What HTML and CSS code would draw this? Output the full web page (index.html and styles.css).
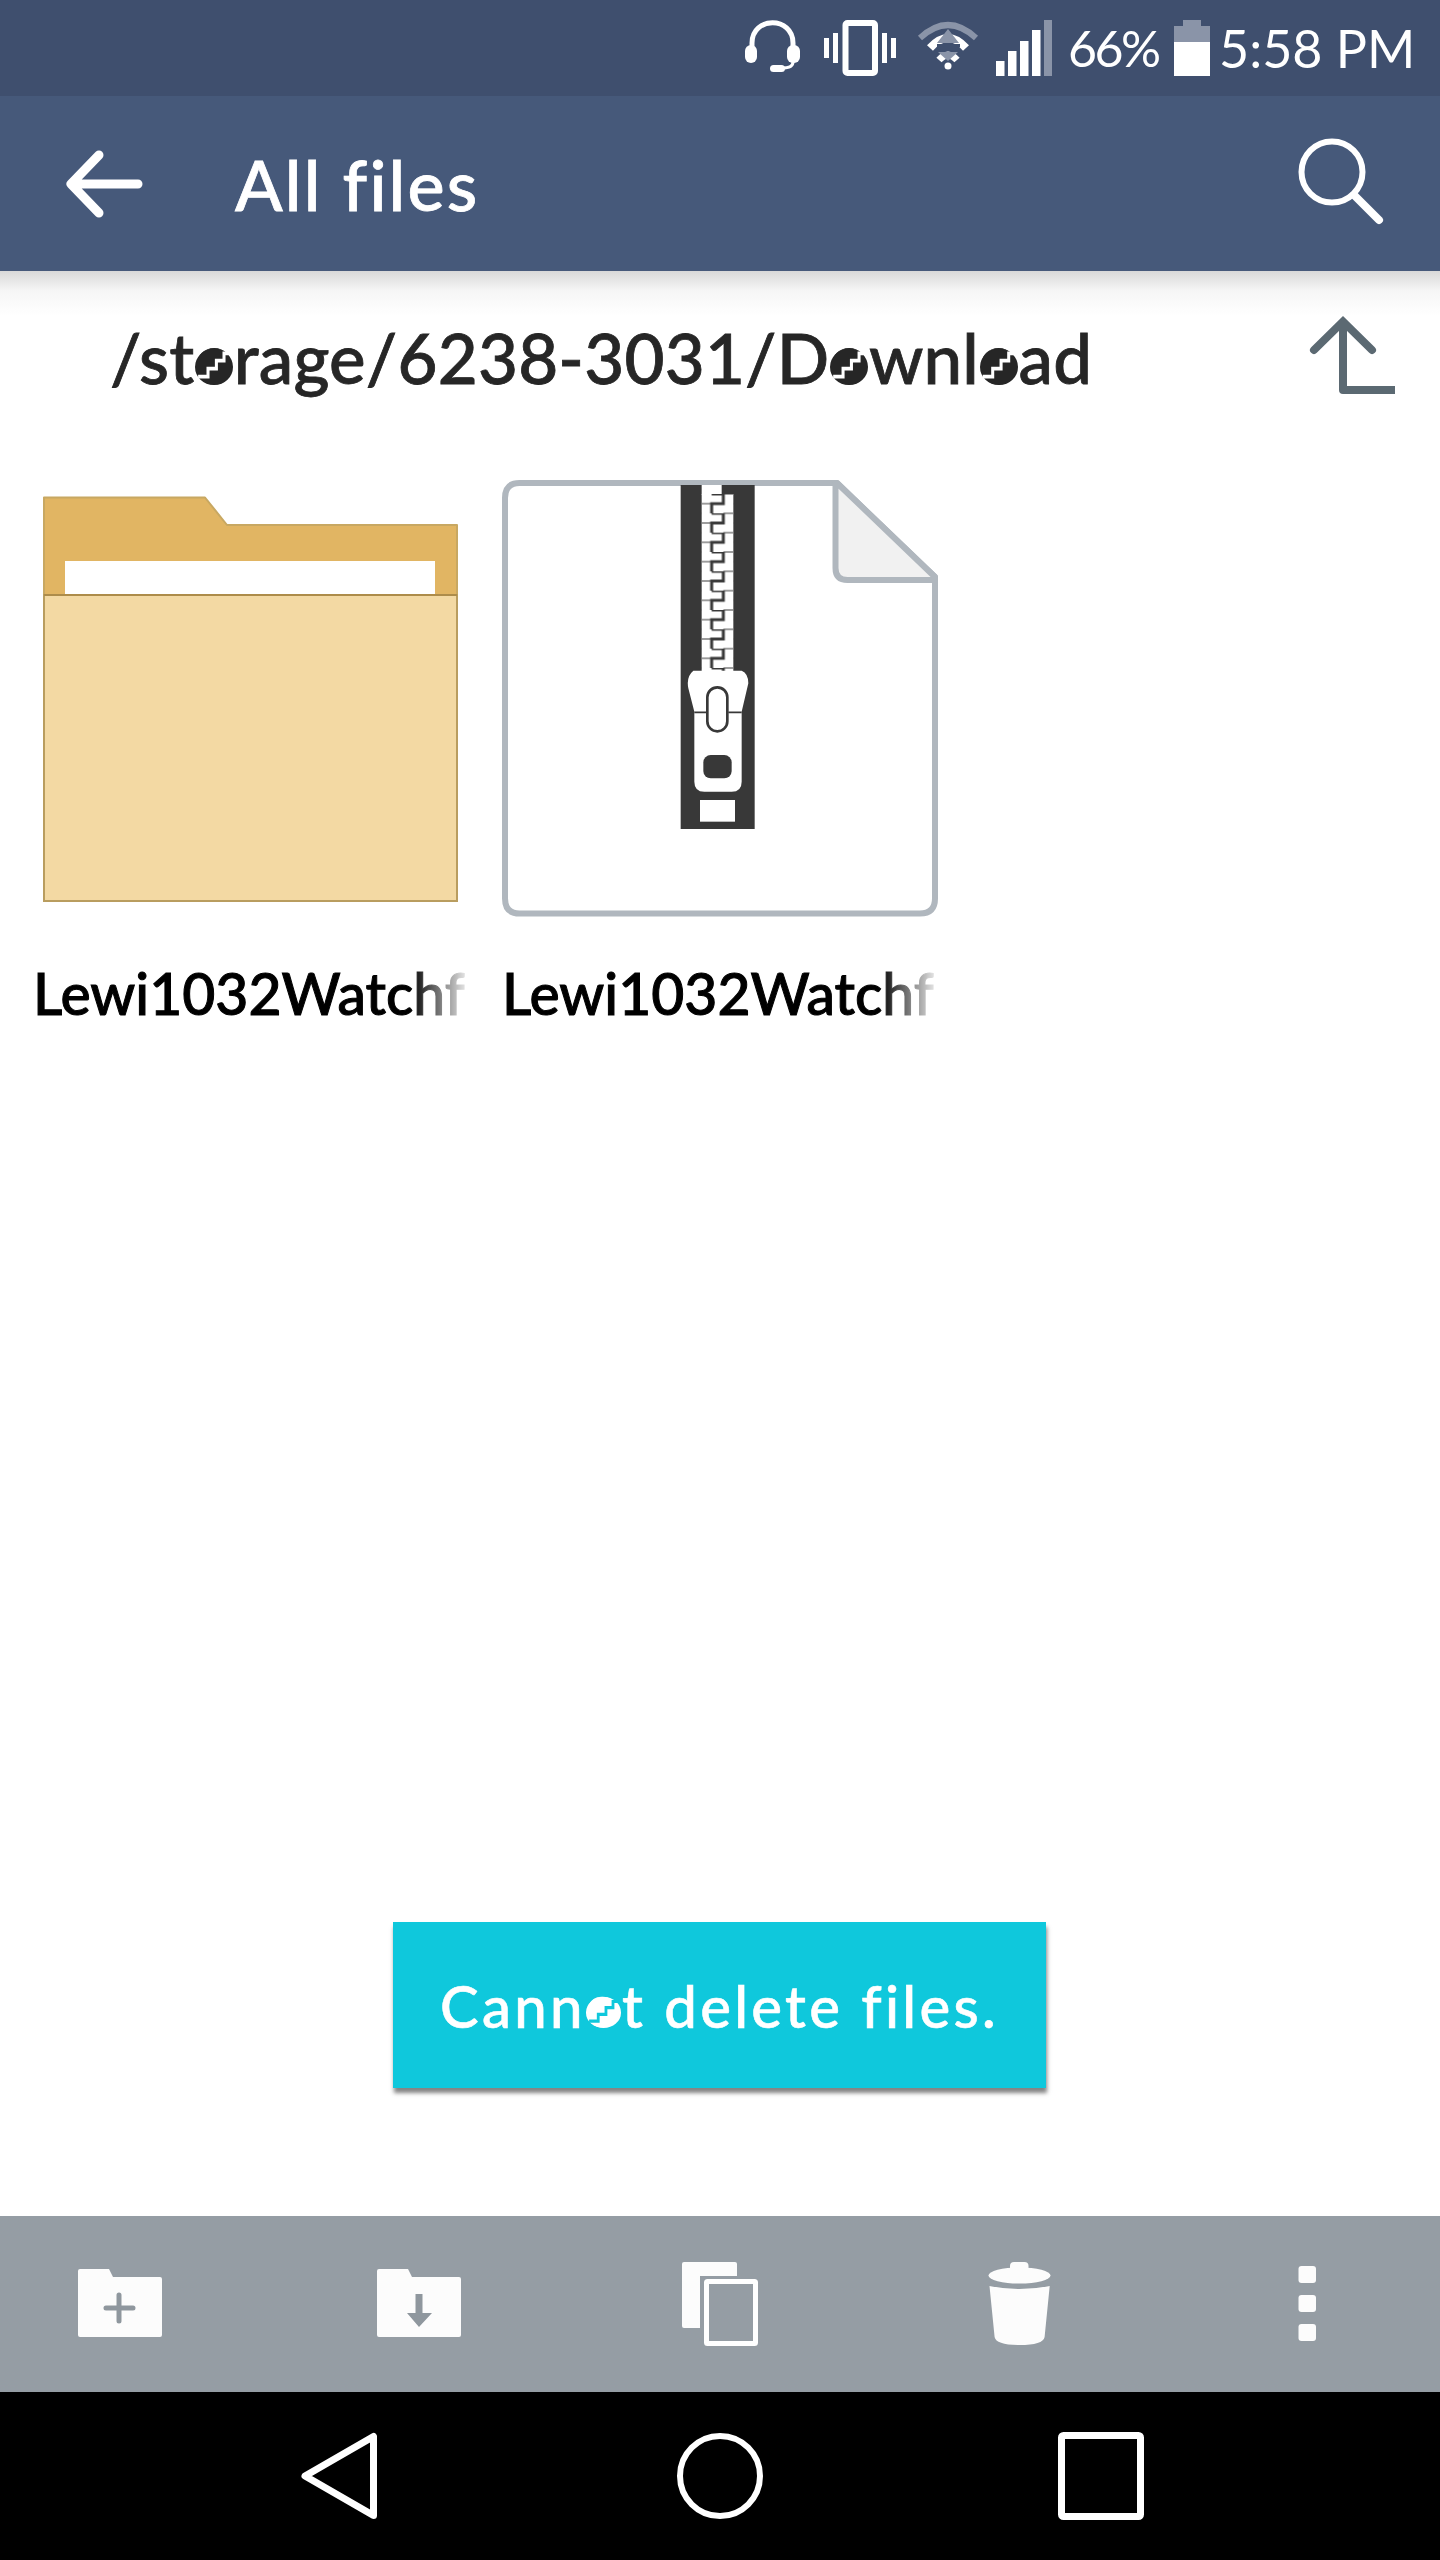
FILE: index.html
```html
<!DOCTYPE html>
<html lang="en">
<head>
    <meta charset="UTF-8">
    <meta name="viewport" content="width=device-width, initial-scale=1.0">
    <title>All files</title>
    <link rel="stylesheet" href="styles.css">
</head>
<body>
    <div class="status-bar">
        <svg class="status-icons" width="316" height="96" viewBox="0 0 316 96">
            <!-- headset -->
            <path d="M12 47V43C12 16 53 16 53 43V47" fill="none" stroke="#fff" stroke-width="5"/>
            <rect x="5" y="45" width="12" height="18" rx="6" fill="#fff"/>
            <rect x="47" y="45" width="13" height="18" rx="6" fill="#fff"/>
            <path d="M53 62Q53 68 42 68" fill="none" stroke="#fff" stroke-width="3"/>
            <rect x="30" y="65" width="15" height="7" rx="3.5" fill="#fff"/>
            <!-- vibrate -->
            <rect x="105.5" y="23" width="29.5" height="50" rx="2" fill="none" stroke="#fff" stroke-width="6"/>
            <rect x="84" y="38" width="5" height="20" fill="#fff"/>
            <rect x="93" y="33" width="5" height="30" fill="#fff"/>
            <rect x="142" y="33" width="5" height="30" fill="#fff"/>
            <rect x="151" y="38" width="5" height="20" fill="#fff"/>
            <!-- wifi -->
            <path d="M180 38Q208 12 236 38" fill="none" stroke="#8a94a8" stroke-width="6"/>
            <path d="M190 48Q208 28 226 48" fill="none" stroke="#fff" stroke-width="8"/>
            <path d="M199 60Q208 50 217 60" fill="none" stroke="#fff" stroke-width="7"/>
            <circle cx="208" cy="66" r="3.5" fill="#fff"/>
            <path d="M208 29L219 43H197Z" fill="#8a94a8"/>
            <rect x="197" y="44" width="23" height="3" fill="#3f4f6e"/>
            <path d="M198 52H218L208 61Z" fill="#8a94a8"/>
            <!-- signal -->
            <rect x="256" y="61" width="8.5" height="15" fill="#fff"/>
            <rect x="268" y="51" width="8.5" height="25" fill="#fff"/>
            <rect x="280" y="41" width="8.5" height="35" fill="#fff"/>
            <rect x="292" y="30" width="8.5" height="46" fill="#fff"/>
            <rect x="304" y="20" width="8" height="56" fill="#8a94a8"/>
        </svg>
        <span class="status-pct">66%</span>
        <svg class="status-batt" width="36" height="96" viewBox="0 0 36 96">
            <rect x="9" y="20" width="18" height="6" fill="#8a94a8"/>
            <rect x="0" y="26" width="36" height="16" fill="#8a94a8"/>
            <rect x="0" y="42" width="36" height="34" fill="#fff"/>
        </svg>
        <span class="status-time">5:58 PM</span>
    </div>

    <div class="toolbar">
        <svg class="back" width="90" height="90" viewBox="0 0 90 90">
            <path d="M39 16L11 45L39 74M11 45H78" fill="none" stroke="#fff" stroke-width="9" stroke-linecap="round" stroke-linejoin="round"/>
        </svg>
        <h1 class="title">All files</h1>
        <svg class="search" width="100" height="101" viewBox="0 0 100 101">
            <circle cx="42" cy="39" r="30.5" fill="none" stroke="#fff" stroke-width="6"/>
            <path d="M64 62L89 87" fill="none" stroke="#fff" stroke-width="8" stroke-linecap="round"/>
        </svg>
    </div>

    <main class="content">
        <div class="path-row">
            <div class="path">/st<span class="cut">o</span>rage/6238-3031/D<span class="cut">o</span>wnl<span class="cut">o</span>ad</div>
            <svg class="up" width="100" height="90" viewBox="0 0 100 90">
                <path d="M14 44L43 15.5L72 44" fill="none" stroke="#5b6972" stroke-width="8" stroke-linecap="round"/>
                <path d="M43 16V84H95" fill="none" stroke="#5b6972" stroke-width="8" stroke-linejoin="round"/>
            </svg>
        </div>

        <div class="files">
            <div class="file">
                <svg class="thumb" width="469" height="455" viewBox="0 0 469 455">
                    <path d="M44 22.5H205L227 50H457V120H44Z" fill="#e1b563" stroke="#c8a862" stroke-width="2" stroke-linejoin="round"/>
                    <rect x="65" y="86" width="370" height="34" fill="#fff"/>
                    <rect x="44" y="120" width="413" height="306" fill="#f3d9a3" stroke="#b99d5f" stroke-width="2"/>
                    <path d="M44 120H457" stroke="#ad8c4a" stroke-width="2"/>
                </svg>
                <div class="name">Lewi1032Watchf</div>
            </div>
            <div class="file">
                <svg class="thumb" width="469" height="455" viewBox="0 0 469 455">
                    <defs>
                        <pattern id="teeth" x="125" y="42" width="95" height="58" patternUnits="userSpaceOnUse">
                            <path d="M30 0H65V29H30V58" fill="none" stroke="#383838" stroke-width="9"/>
                            <path d="M0 29H30M65 0H95M65 58H95" fill="none" stroke="#383838" stroke-width="3"/>
                        </pattern>
                    </defs>
                    <path d="M50.5 8H368L466 102V423.5Q466 438.500 451 438.500H50.500Q36 438.500 36 423.500V23Q36 8 50.500 8Z" fill="#fff" stroke="#b0b7be" stroke-width="6" stroke-linejoin="round"/>
                    <path d="M366.500 8V93Q366.500 105 378.500 105H466V102L368 8Z" fill="#f1f1f1" stroke="#b0b7be" stroke-width="6" stroke-linejoin="round"/>
                    <svg x="191" y="5" width="110" height="360" viewBox="0 0 330 1080">
                        <rect x="62" y="15" width="222" height="1032" fill="#383838"/>
                        <rect x="125" y="15" width="60" height="30" fill="#fff"/>
                        <rect x="125" y="42" width="95" height="535" fill="#fff"/>
                        <rect x="125" y="42" width="95" height="535" fill="url(#teeth)"/>
                        <path d="M100 572H245Q265 580 265 610L245 695V905Q245 935 215 935H133Q103 935 103 905V695L85 625Q78 590 100 572Z" fill="#fff"/>
                        <path d="M103 697H140M205 697H245" stroke="#383838" stroke-width="5"/>
                        <rect x="142" y="622" width="60" height="132" rx="30" fill="#fff" stroke="#383838" stroke-width="8"/>
                        <rect x="130" y="825" width="85" height="70" rx="22" fill="#383838"/>
                        <rect x="120" y="960" width="105" height="65" fill="#fff"/>
                    </svg>
                </svg>
                <div class="name">Lewi1032Watchf</div>
            </div>
        </div>

        <div class="toast">Cann<span class="cut">o</span>t delete files.</div>
    </main>

    <div class="actions">
        <svg width="100" height="100" viewBox="0 0 100 100">
            <path d="M10 15H39L43 23H90Q92 23 92 25V81Q92 83 90 83H10Q8 83 8 81V17Q8 15 10 15Z" fill="#fcfcfc"/>
            <path d="M36 54H63M49 41V67" stroke="#8f979e" stroke-width="5" stroke-linecap="round"/>
        </svg>
        <svg width="100" height="100" viewBox="0 0 100 100">
            <path d="M10 15H39L43 23H90Q92 23 92 25V81Q92 83 90 83H10Q8 83 8 81V17Q8 15 10 15Z" fill="#fcfcfc"/>
            <path d="M46.5 40H53.5V59H63L50 73L38 59H46.5Z" fill="#8f979e"/>
        </svg>
        <svg width="100" height="100" viewBox="0 0 100 100">
            <rect x="14" y="8" width="55" height="66" rx="2" fill="#fcfcfc"/>
            <rect x="32" y="22" width="62" height="74" fill="#959da4"/>
            <rect x="38.5" y="27.5" width="49" height="62" rx="1" fill="#959da4" stroke="#fff" stroke-width="5"/>
        </svg>
        <svg width="100" height="100" viewBox="0 0 100 100">
            <rect x="43" y="8" width="18.5" height="10" rx="4" fill="#fcfcfc"/>
            <ellipse cx="52.5" cy="21.5" rx="31" ry="8" fill="#fcfcfc"/>
            <path d="M22.5 32Q52.5 38 82.700 32L77.600 83Q76 91 52.5 91Q29 91 27.600 83Z" fill="#fcfcfc"/>
        </svg>
        <svg class="more" width="100" height="100" viewBox="0 0 100 100">
            <rect x="41.5" y="12" width="17.5" height="17" rx="3" fill="#fcfcfc"/>
            <rect x="41.5" y="41" width="17.5" height="17" rx="3" fill="#fcfcfc"/>
            <rect x="41.5" y="70" width="17.5" height="17" rx="3" fill="#fcfcfc"/>
        </svg>
    </div>

    <div class="nav">
        <svg width="100" height="100" viewBox="0 0 100 100">
            <path d="M16 50L84.5 10.5V89.5Z" fill="none" stroke="#fff" stroke-width="7" stroke-linejoin="round"/>
        </svg>
        <svg width="100" height="100" viewBox="0 0 100 100">
            <circle cx="50" cy="50" r="40" fill="none" stroke="#fff" stroke-width="6"/>
        </svg>
        <svg width="100" height="100" viewBox="0 0 100 100">
            <rect x="10.5" y="9.5" width="79" height="81" rx="2" fill="none" stroke="#fff" stroke-width="7"/>
        </svg>
    </div>
</body>
</html>
```

FILE: styles.css
```css
* {
    box-sizing: border-box;
}

body {
    margin: 0;
    width: 1440px;
    height: 2560px;
    display: flex;
    flex-direction: column;
    background-color: #fff;
    font-family: Lato, "Noto Sans", sans-serif;
    font-variant-ligatures: none;
}

svg {
    display: block;
    flex-shrink: 0;
}

/* status bar */
.status-bar {
    height: 96px;
    padding-left: 740px;
    display: flex;
    align-items: center;
    background-color: #3f4f6e;
    color: #fff;
}

.status-pct {
    margin-left: 12px;
    width: 106px;
    font-size: 50px;
    letter-spacing: -2.5px;
}

.status-time {
    margin-left: 9px;
    font-size: 52px;
    white-space: nowrap;
}

/* toolbar */
.toolbar {
    height: 175px;
    padding: 0 50px 0 60px;
    display: flex;
    align-items: center;
    background-color: #46597a;
    color: #fff;
}

.title {
    margin: 0 0 0 85px;
    font-size: 70px;
    font-weight: 500;
    letter-spacing: 2.2px;
    -webkit-text-stroke: 0.8px #fff;
}

.search {
    margin-left: auto;
}

/* file list */
.content {
    flex: 1;
    display: flex;
    flex-direction: column;
}

.path-row {
    height: 204px;
    padding: 35px 40px 0 110px;
    display: flex;
    justify-content: space-between;
    background: linear-gradient(#d8d8d8, #f6f6f6 20px, #fff 45px);
    --cut: #fff;
}

.path {
    height: 90px;
    margin-top: 7px;
    font-size: 69px;
    line-height: 90px;
    font-weight: 500;
    letter-spacing: 0.2px;
    color: #262626;
    white-space: nowrap;
    -webkit-text-stroke: 0.8px #262626;
}

.files {
    display: grid;
    grid-template-columns: 469px 469px;
}

.name {
    width: 434px;
    margin: 28px 0 0 33px;
    overflow: hidden;
    font-size: 57px;
    line-height: 70px;
    font-weight: 500;
    color: #000;
    white-space: nowrap;
    -webkit-text-stroke: 1px #000;
    -webkit-mask-image: linear-gradient(to right, #000 87%, rgba(0, 0, 0, 0.08) 100%);
    mask-image: linear-gradient(to right, #000 87%, rgba(0, 0, 0, 0.08) 100%);
}

.cut {
    display: inline-block;
    position: relative;
    line-height: 1;
}

.cut::before {
    content: "";
    position: absolute;
    left: 0.01em;
    right: 0.01em;
    bottom: 0.1em;
    height: 0.53em;
    border-radius: 50%;
    background-color: currentColor;
}

.cut::after {
    content: "";
    position: absolute;
    left: 0.01em;
    right: 0.01em;
    bottom: 0.1em;
    height: 0.53em;
    background-color: var(--cut);
    clip-path: polygon(8% 72%, 30% 72%, 30% 50%, 52% 50%, 52% 28%, 72% 28%, 72% 8%, 92% 8%, 92% 18%, 80% 18%, 80% 38%, 60% 38%, 60% 60%, 38% 60%, 38% 82%, 8% 82%);
}

.toast {
    width: 653px;
    height: 166px;
    margin: auto auto 128px 393px;
    display: flex;
    align-items: center;
    justify-content: center;
    background-color: #0fc8dc;
    box-shadow: 1px 5px 4px rgba(50, 50, 50, 0.6);
    color: #fff;
    font-size: 58px;
    font-weight: 500;
    letter-spacing: 3.3px;
    white-space: pre;
    -webkit-text-stroke: 0.6px #fff;
    --cut: #0fc8dc;
}

/* bottom actions */
.actions {
    height: 176px;
    padding-left: 70px;
    display: flex;
    align-items: center;
    gap: 199px;
    background-color: #959da4;
}

.more {
    margin-left: -9px;
}

/* android nav */
.nav {
    height: 168px;
    padding-left: 289px;
    display: flex;
    align-items: center;
    gap: 281px;
    background-color: #000;
}
```
